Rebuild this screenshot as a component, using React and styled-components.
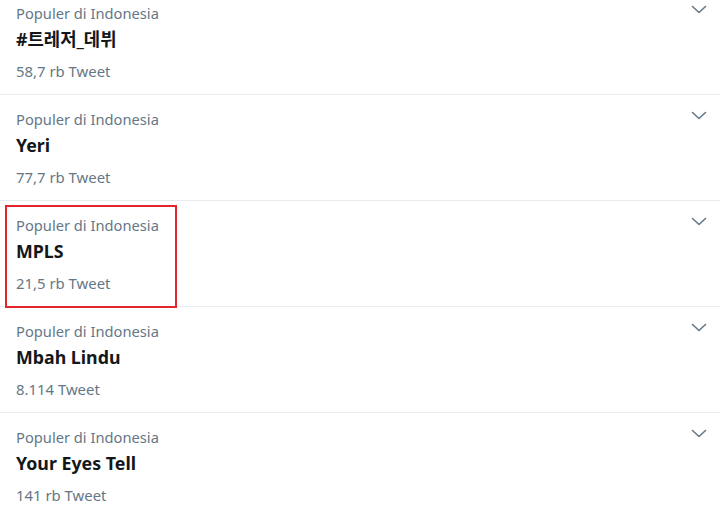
import React from 'react';
import styled, { createGlobalStyle } from 'styled-components';

const trends = [
  { name: '#트레저_데뷔', count: '58,7 rb Tweet' },
  { name: 'Yeri', count: '77,7 rb Tweet' },
  { name: 'MPLS', count: '21,5 rb Tweet', marked: true },
  { name: 'Mbah Lindu', count: '8.114 Tweet' },
  { name: 'Your Eyes Tell', count: '141 rb Tweet' },
];

const Chevron = () => (
  <svg width="16" height="10" viewBox="0 0 16 10" fill="none">
    <path d="M1.5 1.5 L8 7.5 L14.5 1.5" stroke="#657786" strokeWidth="1.6" strokeLinecap="round" strokeLinejoin="round" />
  </svg>
);

const App = () => (
  <>
    <GlobalStyle />
    <List>
      {trends.map((t) => (
        <Row key={t.name} $marked={t.marked}>
          <Info>
            <Label>Populer di Indonesia</Label>
            <Title>{t.name}</Title>
            <Count>{t.count}</Count>
          </Info>
          <IconWrap>
            <Chevron />
          </IconWrap>
          {t.marked && <Highlight />}
        </Row>
      ))}
    </List>
  </>
);

const GlobalStyle = createGlobalStyle`
  html, body {
    margin: 0;
    padding: 0;
    background: #fff;
    overflow: hidden;
  }
  body {
    font-family: "Noto Sans", "Noto Sans CJK KR", sans-serif;
  }
`;

const List = styled.div`
  margin-top: -12px;
  width: 720px;
`;

const Row = styled.div`
  position: relative;
  z-index: ${(p) => (p.$marked ? 2 : 1)};
  display: flex;
  justify-content: space-between;
  align-items: flex-start;
  height: 106px;
  box-sizing: border-box;
  border-top: 1px solid #e6ecf0;
  padding: 14px 13px 0 16px;
`;

const Info = styled.div`
  display: flex;
  flex-direction: column;
`;

const Label = styled.div`
  font-size: 14.7px;
  line-height: 20px;
  color: #657786;
`;

const Title = styled.div`
  margin-top: 3px;
  font-size: 17.8px;
  font-weight: 700;
  line-height: 26px;
  color: #14171a;
`;

const Count = styled.div`
  margin-top: 9px;
  font-size: 14.9px;
  line-height: 20px;
  color: #657786;
`;

const IconWrap = styled.div`
  display: flex;
  margin-top: 2px;
`;

const Highlight = styled.div`
  position: absolute;
  left: 5px;
  top: 4px;
  width: 172px;
  height: 103px;
  box-sizing: border-box;
  border: 2px solid #e2262b;
  pointer-events: none;
`;

export default App;
